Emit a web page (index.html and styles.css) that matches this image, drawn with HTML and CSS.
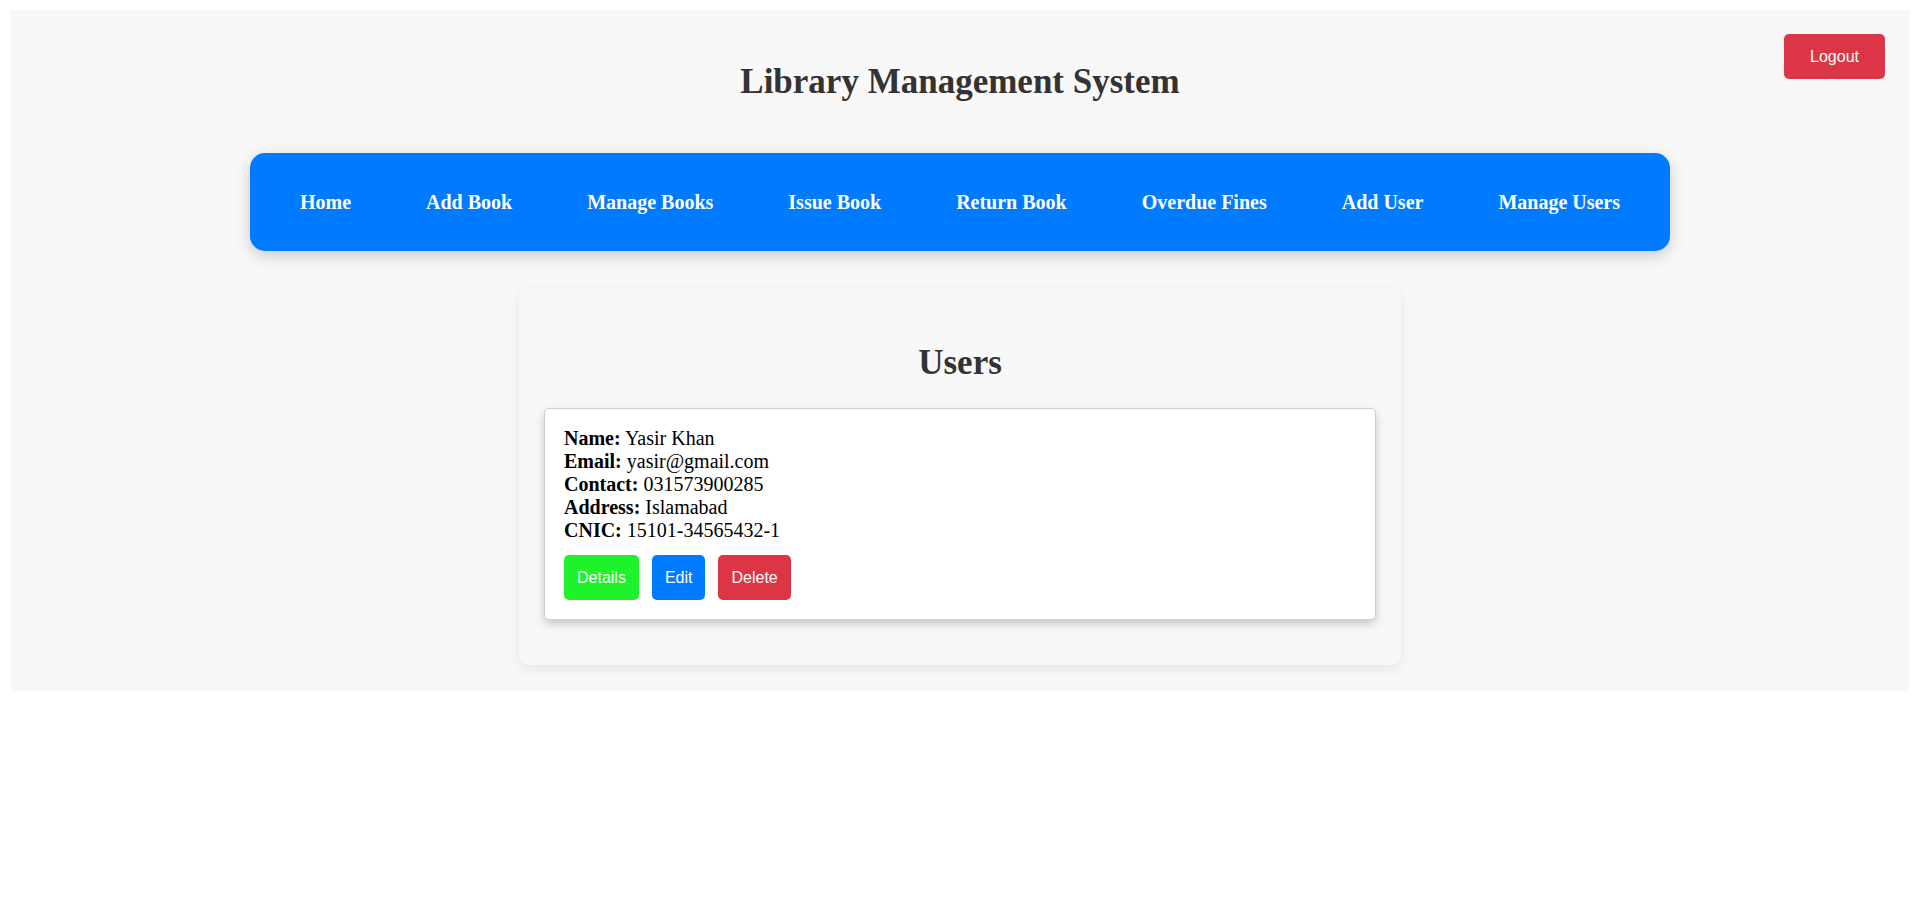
FILE: index.html
```html
<!DOCTYPE html>
<html lang="en">
<head>
<meta charset="utf-8">
<title>Library Management System</title>
<link rel="stylesheet" href="styles.css">
</head>
<body>
<div class="page">
  <button class="btn btn-logout">Logout</button>
  <h1 class="title">Library Management System</h1>
  <nav class="nav">
    <a class="nav-link" href="#">Home</a>
    <a class="nav-link" href="#">Add Book</a>
    <a class="nav-link" href="#">Manage Books</a>
    <a class="nav-link" href="#">Issue Book</a>
    <a class="nav-link" href="#">Return Book</a>
    <a class="nav-link" href="#">Overdue Fines</a>
    <a class="nav-link" href="#">Add User</a>
    <a class="nav-link" href="#">Manage Users</a>
  </nav>
  <section class="panel">
    <h2 class="panel-title">Users</h2>
    <div class="user-card">
      <div class="field"><strong>Name:</strong> Yasir Khan</div>
      <div class="field"><strong>Email:</strong> yasir@gmail.com</div>
      <div class="field"><strong>Contact:</strong> 031573900285</div>
      <div class="field"><strong>Address:</strong> Islamabad</div>
      <div class="field"><strong>CNIC:</strong> 15101-34565432-1</div>
      <div class="actions">
        <button class="btn btn-details">Details</button>
        <button class="btn btn-edit">Edit</button>
        <button class="btn btn-delete">Delete</button>
      </div>
    </div>
  </section>
</div>
</body>
</html>
```

FILE: styles.css
```css
html, body {
  background: #ffffff;
}
body {
  margin: 10px;
  font-family: "Liberation Serif", "Times New Roman", serif;
  color: #000;
}
.page {
  position: relative;
  background: #f8f8f8;
  padding: 25px 25px 26px;
  display: flex;
  flex-direction: column;
  align-items: center;
}
.title {
  margin: 27px 0 51px;
  font-size: 35px;
  line-height: 40px;
  font-weight: bold;
  color: #333;
  text-align: center;
}
.btn {
  font-family: "Liberation Sans", Arial, sans-serif;
  font-size: 16px;
  line-height: 19px;
  color: #fff;
  border: none;
  border-radius: 5px;
  padding: 13px 13px;
  cursor: pointer;
}
.btn-logout {
  position: absolute;
  top: 24px;
  right: 25px;
  width: 101px;
  height: 45px;
  padding: 0;
  background: #dc3545;
}
.nav {
  display: flex;
  gap: 75px;
  padding: 38px 50px;
  background: #007bff;
  border-radius: 15px;
  box-shadow: 0 5px 16px rgba(0, 0, 0, 0.18);
  margin-bottom: 38px;
}
.nav-link {
  color: #fff;
  text-decoration: none;
  font-weight: bold;
  font-size: 20px;
  line-height: 22px;
  white-space: nowrap;
}
.panel {
  width: 882px;
  box-sizing: border-box;
  padding: 25px 25px 25px;
  background: #f8f8f8;
  border-radius: 10px;
  box-shadow: 0 4px 12px rgba(0, 0, 0, 0.08);
}
.panel-title {
  margin: 29px 0 25px;
  font-size: 35px;
  line-height: 40px;
  font-weight: bold;
  color: #333;
  text-align: center;
}
.user-card {
  background: #fff;
  border: 1px solid #cfcfcf;
  border-radius: 5px;
  padding: 18px 19px 19px;
  margin-bottom: 20px;
  box-shadow: 0 4px 10px rgba(0, 0, 0, 0.2);
}
.field {
  font-size: 20px;
  line-height: 23px;
}
.actions {
  display: flex;
  gap: 13px;
  margin-top: 13px;
}
.actions .btn {
  height: 45px;
}
.btn-details {
  background: #1ef22a;
}
.btn-edit {
  background: #007bff;
}
.btn-delete {
  background: #dc3545;
}
```
